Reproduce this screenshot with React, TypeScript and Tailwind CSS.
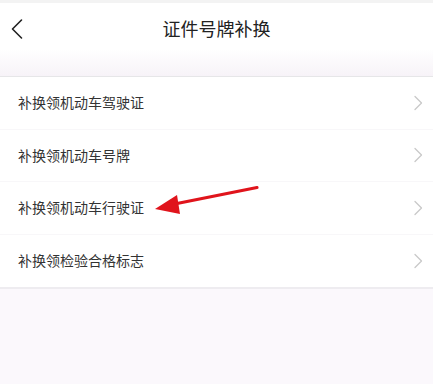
import React from "react";

const items = [
  "补换领机动车驾驶证",
  "补换领机动车号牌",
  "补换领机动车行驶证",
  "补换领检验合格标志",
];

function Chevron() {
  return (
    <svg width="10" height="16" viewBox="0 0 10 16" fill="none">
      <path d="M2 1.5 L8.5 8 L2 14.5" stroke="#c9c9c9" strokeWidth="1.3" strokeLinecap="round" strokeLinejoin="round" />
    </svg>
  );
}

export default function App() {
  return (
    <div
      className="relative w-[433px] h-[384px] overflow-hidden bg-[#fbf8fc] text-[#333]"
      style={{ fontFamily: '"Noto Sans CJK SC", "Noto Sans", sans-serif' }}
    >
      <div className="h-[3px] bg-[#f3f3f3]" />
      <div className="relative h-[46px] bg-white flex items-center justify-center">
        <div className="absolute left-[10px] top-[15px]">
          <svg width="14" height="22" viewBox="0 0 14 22" fill="none">
            <path d="M11.5 2 L2.5 11 L11.5 20" stroke="#222" strokeWidth="1.6" strokeLinecap="round" strokeLinejoin="round" />
          </svg>
        </div>
        <span className="text-[18px] text-[#222] leading-none mt-[3px]">证件号牌补换</span>
      </div>
      <div className="h-[27px] bg-gradient-to-b from-white to-[#f7f3f8]" />
      <div className="bg-white border-t border-[#e6e6e8] border-b-[2px] border-b-[#eeecf0]">
        {items.map((t, i) => (
          <div
            key={t}
            className={`h-[52.5px] flex items-center justify-between pl-[18px] pr-[10px] ${
              i < items.length - 1 ? "border-b border-[#f8f7f9]" : ""
            }`}
          >
            <span className="text-[14px] text-[#333]">{t}</span>
            <Chevron />
          </div>
        ))}
      </div>
      <svg className="absolute left-0 top-0 pointer-events-none" width="433" height="384">
        <line x1="257" y1="187.5" x2="172" y2="204.5" stroke="#e0141c" strokeWidth="3.2" strokeLinecap="round" />
        <polygon points="155,209 177,195 180,214" fill="#e0141c" />
      </svg>
    </div>
  );
}
